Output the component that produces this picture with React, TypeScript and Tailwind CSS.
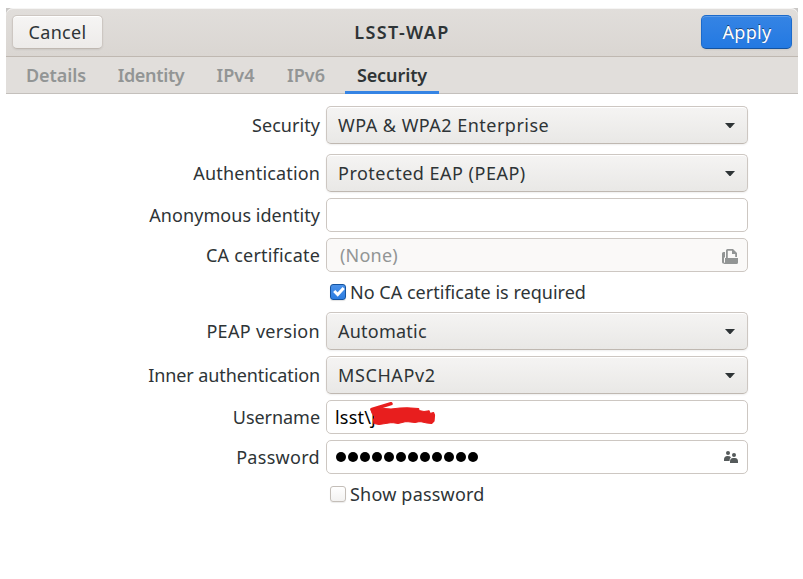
import { ReactNode } from "react";

function Caret() {
  return (
    <svg className="mr-3 h-[5px] w-[10px]" viewBox="0 0 10 5" fill="#2e3436">
      <path d="M0 0h10L5.5 5h-1z" />
    </svg>
  );
}

function Row({ label, tracking = "", gap = "", children }: { label?: string; tracking?: string; gap?: string; children: ReactNode }) {
  return (
    <div className={`flex items-center ${gap}`}>
      <div className={`mr-[6px] w-[314px] text-right ${tracking}`}>{label}</div>
      {children}
    </div>
  );
}

function Select({ children, tracking }: { children: string; tracking: string }) {
  return (
    <button className="flex h-[38px] w-[422px] items-center justify-between rounded-[5px] border border-[#cdc7c2] border-b-[#bfb8b1] bg-gradient-to-b from-[#f5f4f3] to-[#e9e8e6] pl-[11px] shadow-[inset_0_1px_#fff,0_1px_2px_rgba(0,0,0,0.07)]">
      <span className={tracking}>{children}</span>
      <Caret />
    </button>
  );
}

function Entry({ children, className = "bg-white pl-2" }: { children?: ReactNode; className?: string }) {
  return (
    <div className={`relative flex h-[34px] w-[422px] items-center rounded-[5px] border border-[#cdc7c2] ${className}`}>
      {children}
    </div>
  );
}

function Scribble() {
  return (
    <svg className="absolute left-[42px] top-px h-[28px] w-[70px]" viewBox="369 402 70 28" fill="#e81e1e" stroke="#e81e1e" strokeLinejoin="round" strokeLinecap="round">
      <path d="M372 409.500L391 403.700" strokeWidth="3.400" />
      <path
        d="M371 409L378 408L391 409L400 408L407 407.800L418.500 408.500L419 410.500L424 411.500L429 410.800L430 413.500L433.500 412.500L434.500 415L434 421L431.500 423.500L427 423L420 421.500L415 422.500L406 421.500L398 423.500L392 422.500L379 424.500L374 423.500L373.500 420L375 417L372 413Z"
        strokeWidth="1.200"
      />
    </svg>
  );
}

const tabs = [
  { name: "Details", box: "w-[84px] tracking-[-0.1px]" },
  { name: "Identity", box: "w-[90px] tracking-[-0.35px]" },
  { name: "IPv4", box: "w-[63px]" },
  { name: "IPv6", box: "w-[62px]" },
  { name: "Security", box: "w-[94px] tracking-[-0.1px]" },
];

export default function App() {
  return (
    <div className="h-[579px] w-[803px] overflow-hidden bg-white pl-[6px] pt-2 font-['Noto_Sans',sans-serif] text-[18px] leading-6 text-[#2e3436]">
      <div className="w-[792px] bg-[#c9c7c5]">
        <header className="flex h-[49px] items-center justify-between rounded-t-[7px] border-b border-[#bfb8b1] bg-gradient-to-b from-[#e1dedb] to-[#dad6d2] px-[6px] shadow-[inset_0_1px_#f6f5f4]">
          <button className="h-[34px] w-[91px] rounded-[5px] border border-[#cdc7c2] border-b-[#bfb8b1] bg-gradient-to-b from-[#f6f5f4] to-[#edebe9] tracking-[0.3px] shadow-[inset_0_1px_#fff,0_1px_2px_rgba(0,0,0,0.07)]">
            Cancel
          </button>
          <h1 className="font-semibold tracking-[1.35px]">LSST-WAP</h1>
          <button className="h-[34px] w-[91px] rounded-[5px] border border-[#1b6acb] border-b-[#15539e] bg-gradient-to-b from-[#3584e4] to-[#2379e2] pl-px tracking-[0.3px] text-white shadow-[inset_0_1px_rgba(255,255,255,0.2),0_1px_2px_rgba(0,0,0,0.07)] [text-shadow:0_-1px_rgba(0,0,0,0.5)]">
            Apply
          </button>
        </header>
      </div>
      <nav className="flex h-[37px] w-[792px] gap-2 border-b border-[#c4c0bc] bg-[#e1dedb] pl-2">
        {tabs.map((t) => (
          <div
            key={t.name}
            className={`pt-[6px] text-center font-semibold ${t.box} ${t.name === "Security" ? "-mb-px border-b-[3px] border-[#3584e4]" : "text-[#929595]"}`}
          >
            {t.name}
          </div>
        ))}
      </nav>
      <main className="pt-3">
        <Row label="Security" tracking="tracking-[0.05px]">
          <Select tracking="tracking-[0.48px]">{"WPA & WPA2 Enterprise"}</Select>
        </Row>
        <Row label="Authentication" tracking="tracking-[0.15px]" gap="mt-[10px]">
          <Select tracking="tracking-[0.5px]">Protected EAP (PEAP)</Select>
        </Row>
        <Row label="Anonymous identity" tracking="tracking-[0.05px]" gap="mt-[6px]">
          <Entry />
        </Row>
        <Row label="CA certificate" tracking="tracking-[0.2px]" gap="mt-[6px]">
          <Entry className="justify-between bg-[#faf9f8] pl-[13px] pr-[9px] text-[#929595]">
            <span className="tracking-[0.2px]">(None)</span>
            <svg className="mt-[3px] h-4 w-4" viewBox="0 0 16 16" fill="#929595">
              <path d="M0 4.500Q0 3 1.500 3H3v5L2 9v5.500H1.500Q0 14.500 0 13z" />
              <path d="M4 9V1.500Q4 0 5.500 0H11l4 4V8h-1.800V5H10V1.800H5.800V9z" />
              <path d="M3 9h13v4.500q0 1.500-1.500 1.500h-13L3 13z" />
            </svg>
          </Entry>
        </Row>
        <Row gap="mt-2">
          <div className="flex h-6 items-center tracking-[0.02px]">
            <span className="ml-1 mr-1 flex h-4 w-4 items-center justify-center rounded-[3px] border border-[#15539e] bg-gradient-to-b from-[#4a91e8] to-[#2b7de1] shadow-[0_1px_1px_rgba(0,0,0,0.12)]">
              <svg className="h-[14px] w-[14px]" viewBox="0 0 14 14" fill="none" stroke="#fff" strokeWidth="3">
                <path d="M3.200 6L6.700 9.500L12.700 3" />
              </svg>
            </span>
            No CA certificate is required
          </div>
        </Row>
        <Row label="PEAP version" tracking="tracking-[0.3px]" gap="mt-2">
          <Select tracking="tracking-[0.23px]">Automatic</Select>
        </Row>
        <Row label="Inner authentication" tracking="tracking-[-0.1px]" gap="mt-[6px]">
          <Select tracking="tracking-[0.6px]">MSCHAPv2</Select>
        </Row>
        <Row label="Username" tracking="tracking-[-0.05px]" gap="mt-[6px]">
          <Entry className="bg-white pl-2 text-black">
            <span className="tracking-[0.2px]">lsst\j</span>
            <Scribble />
          </Entry>
        </Row>
        <Row label="Password" tracking="tracking-[0.3px]" gap="mt-[6px]">
          <Entry className="justify-between bg-white pl-[9px] pr-[9px]">
            <span className="flex gap-[2px]">
              {Array.from({ length: 12 }, (_, i) => (
                <i key={i} className="h-[10px] w-[10px] rounded-full bg-black" />
              ))}
            </span>
            <svg className="h-[12px] w-[14px]" viewBox="0 0 14 12" fill="#555a5b">
              <circle cx="4" cy="2" r="2" />
              <circle cx="10" cy="4" r="2" />
              <path d="M0 10V8.500Q0 5 3.500 5Q6 5 7 6.200Q5.500 7.500 5.500 10z" />
              <path d="M6 12V10.500Q6 7 9 7h2q3 0 3 3.500V12z" />
            </svg>
          </Entry>
        </Row>
        <Row gap="mt-2">
          <div className="flex h-6 items-center tracking-[0.2px]">
            <span className="ml-1 mr-1 h-4 w-4 rounded-[3px] border border-[#c4beb8] bg-gradient-to-b from-white to-[#f3f2f1] shadow-[0_1px_1px_rgba(0,0,0,0.08)]" />
            Show password
          </div>
        </Row>
      </main>
    </div>
  );
}
